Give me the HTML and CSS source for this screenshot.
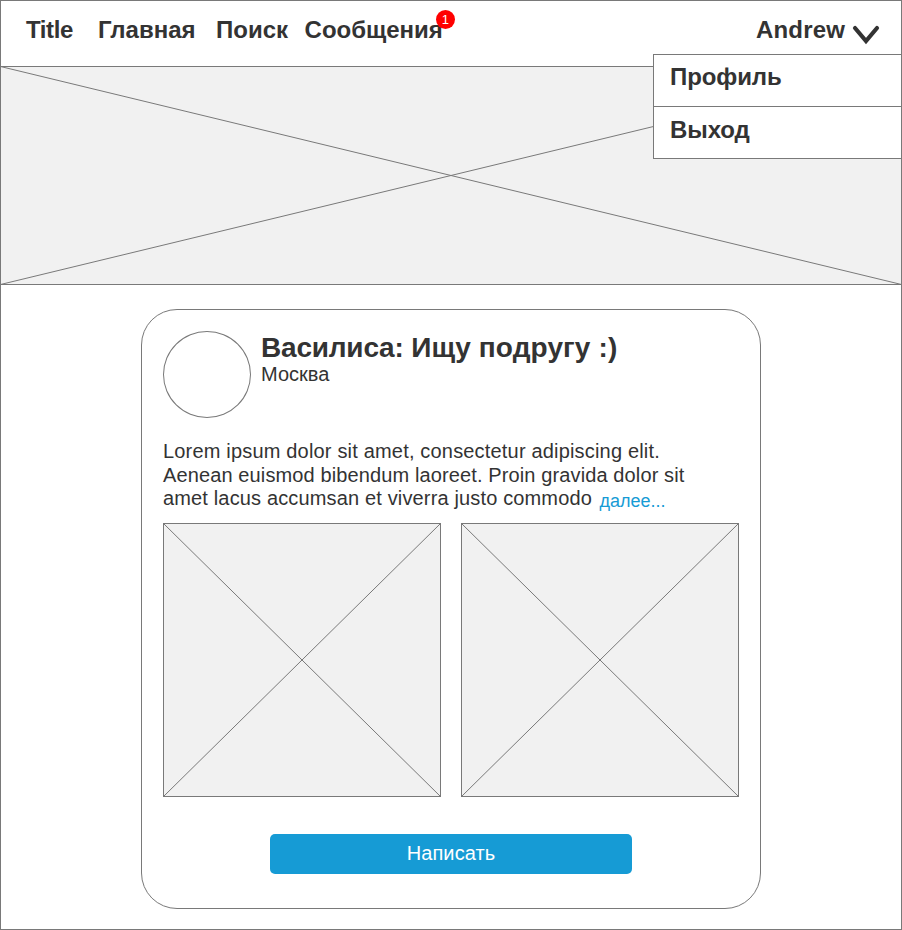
FILE: index.html
```html
<!DOCTYPE html>
<html lang="ru">
<head>
<meta charset="utf-8">
<title>Title</title>
<link rel="stylesheet" href="styles.css">
</head>
<body>
<div class="page">
  <header class="header">
    <nav class="nav">
      <a class="nav-title">Title</a>
      <a class="nav-home">Главная</a>
      <a class="nav-search">Поиск</a>
      <a class="nav-messages">Сообщения<span class="badge">1</span></a>
    </nav>
    <div class="user">
      <span class="user-name">Andrew</span>
      <svg class="chevron" width="28" height="22" viewBox="0 0 28 22"><path d="M3 4L14 17L25 4" fill="none" stroke="#333" stroke-width="4.2" stroke-linecap="round"/></svg>
      <div class="menu">
        <a class="menu-item">Профиль</a>
        <a class="menu-item">Выход</a>
      </div>
    </div>
  </header>
  <svg class="banner" width="902" height="219" viewBox="0 0 902 219"><rect x=".5" y=".5" width="901" height="218"/><path d="M.5 .5L901.5 218.5M.5 218.5L901.5 .5"/></svg>
  <article class="card">
    <div class="author">
      <div class="avatar"></div>
      <div class="author-text">
        <h1>Василиса: <span class="topic">Ищу подругу :)</span></h1>
        <p>Москва</p>
      </div>
    </div>
    <p class="text"><span class="line-wide">Lorem ipsum dolor sit amet, consectetur adipiscing elit.</span><br><span class="line-tight">Aenean euismod bibendum laoreet. Proin gravida dolor sit</span><br><span class="line-medium">amet lacus accumsan et viverra justo commodo</span> <a class="more">далее...</a></p>
    <div class="photos">
      <svg class="photo" width="278" height="274" viewBox="0 0 278 274"><rect x=".5" y=".5" width="277" height="273"/><path d="M.5 .5L277.5 273.5M.5 273.5L277.5 .5"/></svg>
      <svg class="photo" width="278" height="274" viewBox="0 0 278 274"><rect x=".5" y=".5" width="277" height="273"/><path d="M.5 .5L277.5 273.5M.5 273.5L277.5 .5"/></svg>
    </div>
    <button class="write">Написать</button>
  </article>
</div>
</body>
</html>
```
FILE: styles.css
```css
* { box-sizing: border-box; margin: 0; }
body { font-family: "Liberation Sans", Arial, sans-serif; color: #333; background: #fff; }
.page { position: relative; width: 902px; height: 930px; }
.page::after { content: ""; position: absolute; inset: 0; border: 1px solid #797979; pointer-events: none; }
.header { display: flex; justify-content: space-between; height: 66px; padding: 16px 22px 0 26px; font-size: 24px; font-weight: 700; line-height: 28px; }
.nav { display: flex; }
.nav-title { letter-spacing: -0.4px; }
.nav-home { margin-left: 25px; }
.nav-search { margin-left: 20.5px; }
.nav-messages { position: relative; margin-left: 16.5px; }
.badge { position: absolute; top: -6px; right: -12px; width: 19px; height: 19px; border-radius: 50%; background: #f00; color: #fff; font-size: 13px; font-weight: 400; line-height: 19px; text-align: center; }
.user { position: relative; display: flex; gap: 7px; }
.user-name { letter-spacing: 0.15px; }
.chevron { margin-top: 8px; }
.menu { position: absolute; top: 38px; right: -22px; width: 249px; height: 105px; border: 1px solid #797979; background: #fff; }
.menu-item { display: block; height: 51px; padding: 8px 16px; letter-spacing: -0.1px; }
.menu-item + .menu-item { height: 52px; padding-top: 9px; border-top: 1px solid #797979; }
.banner, .photo { display: block; fill: #f1f1f1; stroke: #797979; stroke-width: 1; }
.card { width: 620px; height: 600px; margin: 24px auto 0; padding: 21px; border: 1px solid #797979; border-radius: 36px; }
.author { display: flex; gap: 10px; height: 87px; }
.avatar { width: 88px; height: 87px; border: 1px solid #797979; border-radius: 50%; }
h1 { padding-top: 1px; font-size: 28px; line-height: 32px; letter-spacing: -0.2px; }
.topic { letter-spacing: 0.12px; }
.author p { font-size: 20px; line-height: 20px; }
.text { height: 83px; margin-top: 22px; font-size: 20px; line-height: 23.5px; white-space: nowrap; }
.line-wide { letter-spacing: 0.18px; }
.line-tight { letter-spacing: 0.12px; }
.line-medium { letter-spacing: 0.15px; }
.more { position: relative; top: 2px; margin-left: 2px; font-size: 18px; color: #169bd5; }
.photos { display: flex; gap: 20px; }
.write { display: block; width: 362px; height: 40px; margin: 37px auto 0; padding: 0 0 2px; border: 0; border-radius: 5px; background: #169bd5; color: #fff; font: 20px "Liberation Sans", Arial, sans-serif; letter-spacing: 0.1px; }
```
